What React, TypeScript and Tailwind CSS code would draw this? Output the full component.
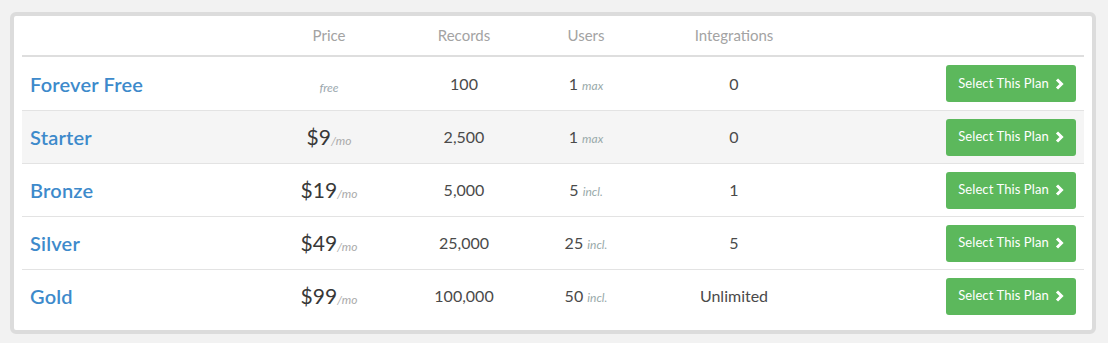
// DATA
const plans = [
  { name: "Forever Free", price: null, records: "100", users: "1", usersNote: "max", integrations: "0" },
  { name: "Starter", price: "$9", records: "2,500", users: "1", usersNote: "max", integrations: "0" },
  { name: "Bronze", price: "$19", records: "5,000", users: "5", usersNote: "incl.", integrations: "1" },
  { name: "Silver", price: "$49", records: "25,000", users: "25", usersNote: "incl.", integrations: "5" },
  { name: "Gold", price: "$99", records: "100,000", users: "50", usersNote: "incl.", integrations: "Unlimited" },
];

const cols = "grid grid-cols-[240px_134px_136px_108px_188px_1fr] items-center";

const Chevron = () => (
  <svg width="9" height="12" viewBox="0 0 9 12" className="shrink-0">
    <polyline points="2,1.5 6.5,6 2,10.5" fill="none" stroke="white" strokeWidth="3" />
  </svg>
);

// COMP
export default function App() {
  return (
    <div
      className="min-h-[343px] w-full bg-[#f2f2f2] pt-3 pl-[10px] pr-3"
      style={{ fontFamily: "Lato, 'Open Sans', sans-serif" }}
    >
      <div className="rounded-md border-4 border-[#dcdcdc] bg-white px-2 pb-2">
        <div className={`${cols} h-[41px] border-b-2 border-[#dedede] text-[15px] text-[#a3a3a3]`}>
          <div />
          <div className="text-center">Price</div>
          <div className="text-center">Records</div>
          <div className="text-center">Users</div>
          <div className="text-center">Integrations</div>
          <div />
        </div>
        {plans.map((plan, i) => (
          <div
            key={plan.name}
            className={`${cols} h-[53px] ${i > 0 ? "border-t border-[#e3e3e3]" : ""} ${
              i === 1 ? "bg-[#f5f5f5]" : ""
            }`}
          >
            <div className="pl-2 text-[20px] font-semibold tracking-[0.2px] text-[#3d8acb]">{plan.name}</div>
            <div className="text-center">
              {plan.price ? (
                <span>
                  <span className="text-[21px] text-[#383838]">{plan.price}</span>
                  <span className="text-[12px] italic text-[#aaa]">/mo</span>
                </span>
              ) : (
                <span className="relative top-[2px] text-[12px] italic text-[#9aa6ad]">free</span>
              )}
            </div>
            <div className="text-center text-[16px] text-[#4a4a4a]">{plan.records}</div>
            <div className="text-center text-[16px] text-[#4a4a4a]">
              {plan.users} <span className="text-[12px] italic text-[#9aa]">{plan.usersNote}</span>
            </div>
            <div className="text-center text-[16px] text-[#4a4a4a]">{plan.integrations}</div>
            <div className="flex justify-end pr-2">
              <button className="flex h-[37px] w-[130px] items-center justify-center gap-1.5 rounded-[3px] bg-[#5cb85c] text-[13px] tracking-[0.1px] text-white">
                Select This Plan
                <Chevron />
              </button>
            </div>
          </div>
        ))}
      </div>
    </div>
  );
}
